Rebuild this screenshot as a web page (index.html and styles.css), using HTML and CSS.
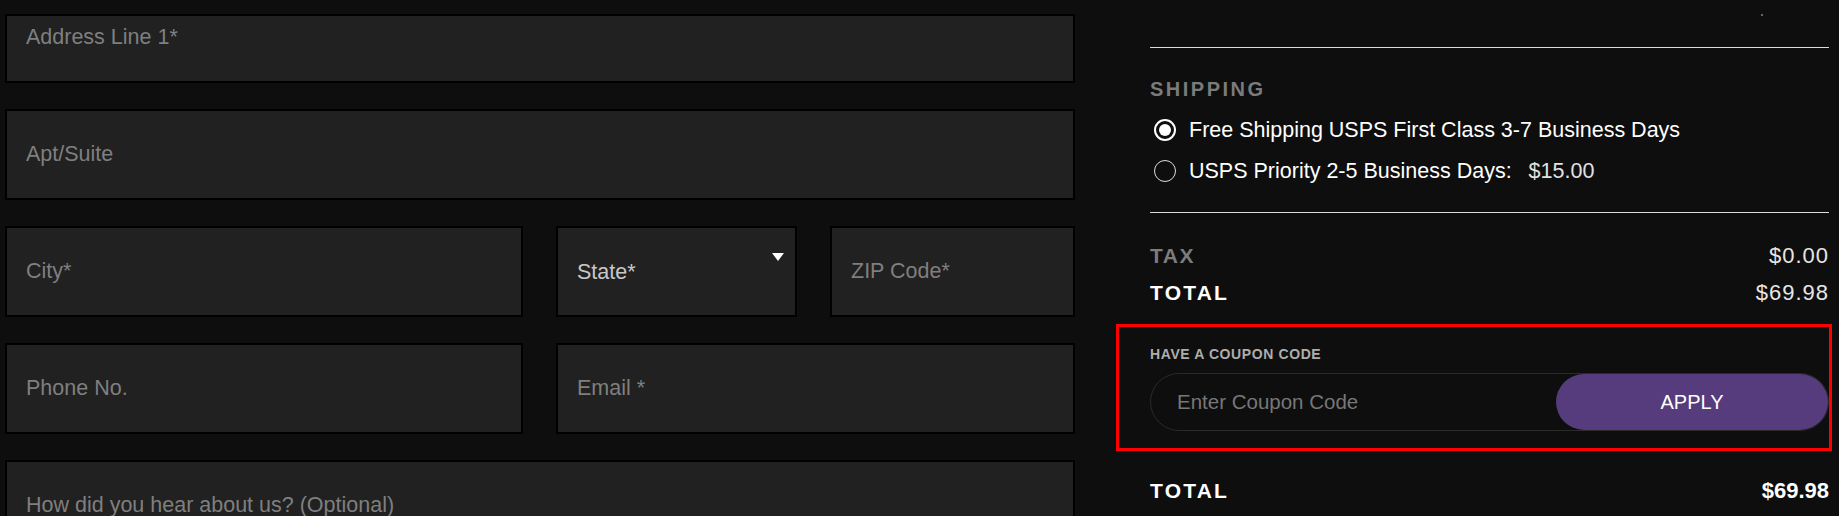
FILE: index.html
```html
<!DOCTYPE html>
<html>
<head>
  <title>Checkout</title>
  <meta charset="UTF-8">
  <meta name="viewport" content="width=device-width, initial-scale=1.0">
  <link rel="stylesheet" href="styles.css">
</head>
<body>
  <div class="page">
    <form class="form">
      <input class="field first" type="text" placeholder="Address Line 1*">
      <input class="field" type="text" placeholder="Apt/Suite">
      <div class="row three">
        <input class="field" type="text" placeholder="City*">
        <div class="select-wrap">
          <select class="field select">
            <option>State*</option>
          </select>
        </div>
        <input class="field" type="text" placeholder="ZIP Code*">
      </div>
      <div class="row two">
        <input class="field" type="text" placeholder="Phone No.">
        <input class="field" type="email" placeholder="Email *">
      </div>
      <input class="field" type="text" placeholder="How did you hear about us? (Optional)">
    </form>

    <div class="summary">
      <div class="dot"></div>
      <div class="rule top"></div>

      <div class="section-title">SHIPPING</div>
      <div class="options">
        <label class="option">
          <span class="radio checked"></span>
          Free Shipping USPS First Class 3-7 Business Days
        </label>
        <label class="option">
          <span class="radio"></span>
          USPS Priority 2-5 Business Days: <span class="price">$15.00</span>
        </label>
      </div>

      <div class="rule mid"></div>

      <div class="line tax">
        <span class="label">TAX</span>
        <span class="amount">$0.00</span>
      </div>
      <div class="line total">
        <span class="label">TOTAL</span>
        <span class="amount">$69.98</span>
      </div>

      <div class="coupon">
        <div class="coupon-title">HAVE A COUPON CODE</div>
        <div class="coupon-box">
          <input class="coupon-input" type="text" placeholder="Enter Coupon Code">
          <button class="apply" type="button">APPLY</button>
        </div>
      </div>

      <div class="line grand">
        <span class="label">TOTAL</span>
        <span class="amount">$69.98</span>
      </div>
    </div>
  </div>
</body>
</html>
```

FILE: styles.css
```css
html, body {
  overflow: hidden;
}
body {
  margin: 0;
  background: #0e0e0e;
  color: #fff;
  font-family: "Liberation Sans", Arial, sans-serif;
}
.page {
  display: flex;
  gap: 75px;
  padding: 0 10px 0 5px;
}

/* address form */
.form {
  width: 1070px;
  flex-shrink: 0;
  display: flex;
  flex-direction: column;
  gap: 26px;
  margin: 0;
  padding-top: 14px;
}
.row {
  display: grid;
  gap: 33px;
}
.row.three {
  grid-template-columns: 518px 241px 1fr;
}
.row.two {
  grid-template-columns: 518px 1fr;
}
.field {
  display: block;
  width: 100%;
  height: 91px;
  box-sizing: border-box;
  margin: 0;
  padding: 0 19px;
  border: 2px solid #000;
  border-radius: 0;
  background: #212121;
  color: #c8c8c8;
  font-family: "Liberation Sans", Arial, sans-serif;
  font-size: 21.5px;
  outline: none;
}
.field::placeholder {
  color: #7f7f7f;
}
.field.first {
  height: 69px;
  padding-bottom: 22px;
}
.select-wrap {
  position: relative;
}
.select {
  appearance: none;
  -webkit-appearance: none;
  color: #c8c8c8;
}
.select-wrap::after {
  content: "";
  position: absolute;
  top: 27px;
  right: 13px;
  border-left: 6px solid transparent;
  border-right: 6px solid transparent;
  border-top: 8px solid #fff;
}

/* order summary */
.summary {
  width: 679px;
  flex-shrink: 0;
}
.dot {
  width: 2px;
  height: 2px;
  margin: 14px 0 0 611px;
  background: #5f6d72;
}
.rule {
  height: 1px;
  background: #dcdcdc;
}
.rule.top {
  margin-top: 31px;
}
.rule.mid {
  margin-top: 27px;
}
.section-title {
  margin-top: 29px;
  font-size: 20px;
  line-height: 24px;
  font-weight: bold;
  letter-spacing: 2.5px;
  color: #7b7b7b;
}
.options {
  margin-top: 15px;
  display: flex;
  flex-direction: column;
  gap: 13px;
}
.option {
  display: flex;
  align-items: center;
  gap: 13px;
  padding-left: 4px;
  font-size: 21.5px;
  line-height: 28px;
  color: #fff;
}
.price {
  margin-left: 4px;
  color: #e2e2e2;
}
.radio {
  position: relative;
  flex-shrink: 0;
  width: 22px;
  height: 22px;
  box-sizing: border-box;
  border: 1.5px solid #dedede;
  border-radius: 50%;
}
.radio.checked {
  border: 2px solid #fff;
}
.radio.checked::after {
  content: "";
  position: absolute;
  inset: 3px;
  border-radius: 50%;
  background: #fff;
}
.line {
  display: flex;
  justify-content: space-between;
  align-items: baseline;
  font-size: 21px;
  line-height: 28px;
}
.line.tax {
  margin-top: 29px;
}
.line.total {
  margin-top: 9px;
}
.line.grand {
  margin-top: 26px;
}
.label {
  font-weight: bold;
  letter-spacing: 2.2px;
  color: #fff;
}
.tax .label {
  letter-spacing: 1.5px;
  color: #7c7c7c;
}
.amount {
  font-size: 22px;
  letter-spacing: 1px;
  color: #e6e6e6;
}
.grand .amount {
  font-weight: bold;
  letter-spacing: 0;
  color: #fff;
}

/* coupon */
.coupon {
  margin: 17px -3px 0 -34px;
  padding: 18px 0 17px 31px;
  border: 3px solid #f00;
}
.coupon-title {
  font-size: 14px;
  line-height: 18px;
  font-weight: bold;
  letter-spacing: 0.6px;
  color: #adadad;
}
.coupon-box {
  display: flex;
  height: 58px;
  box-sizing: border-box;
  margin-top: 10px;
  border: 1px solid #2a2a2a;
  border-radius: 29px;
}
.coupon-input {
  flex: 1;
  min-width: 0;
  padding: 0 0 0 26px;
  border: none;
  background: transparent;
  color: #fff;
  font-family: "Liberation Sans", Arial, sans-serif;
  font-size: 20.5px;
  outline: none;
}
.coupon-input::placeholder {
  color: #777;
}
.apply {
  width: 272px;
  height: 56px;
  border: none;
  border-radius: 28px;
  background: #563c7d;
  color: #fff;
  font-family: "Liberation Sans", Arial, sans-serif;
  font-size: 20px;
  cursor: pointer;
}
```
